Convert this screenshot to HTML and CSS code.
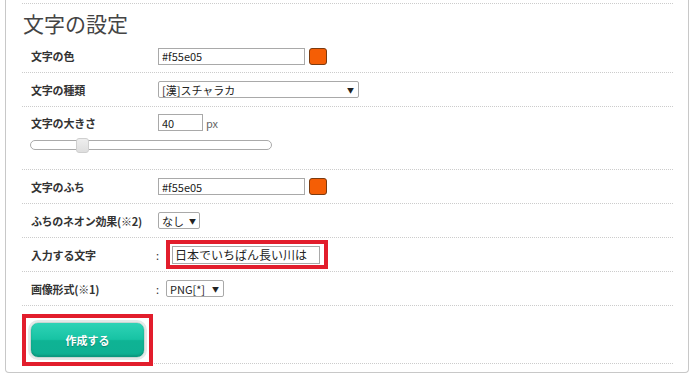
FILE: index.html
```html
<!DOCTYPE html>
<html lang="ja">
<head>
  <meta charset="UTF-8">
  <title>文字の設定</title>
  <link rel="stylesheet" href="styles.css">
</head>
<body>
  <div class="panel">
    <div class="top-rule"></div>
    <h2 class="title">文字の設定</h2>

    <div class="row first">
      <div class="label">文字の色</div>
      <input class="field color-field" type="text" value="#f55e05">
      <span class="swatch"></span>
    </div>

    <div class="row">
      <div class="label">文字の種類</div>
      <div class="select font-select"><span>[漢]スチャラカ</span><span class="arrow">▼</span></div>
    </div>

    <div class="row size-row">
      <div class="size-line">
        <div class="label">文字の大きさ</div>
        <input class="field size-field" type="text" value="40">
        <span class="unit">px</span>
      </div>
      <div class="slider"><span class="thumb"></span></div>
    </div>

    <div class="row">
      <div class="label">文字のふち</div>
      <input class="field color-field" type="text" value="#f55e05">
      <span class="swatch"></span>
    </div>

    <div class="row">
      <div class="label">ふちのネオン効果(※2)</div>
      <div class="select small-select"><span>なし</span><span class="arrow">▼</span></div>
    </div>

    <div class="row">
      <div class="label">入力する文字</div>
      <span class="colon">:</span>
      <div class="highlight text-box">
        <input class="field text-field" type="text" value="日本でいちばん長い川は">
      </div>
    </div>

    <div class="row">
      <div class="label">画像形式(※1)</div>
      <span class="colon">:</span>
      <div class="select format-select"><span>PNG[*]</span><span class="arrow">▼</span></div>
    </div>

    <div class="button-row">
      <div class="highlight btn-box">
        <button class="make-btn">作成する</button>
      </div>
    </div>
  </div>
</body>
</html>
```

FILE: styles.css
```css
body {
  margin: 0;
  background: #fff;
  font-family: "Noto Sans CJK JP", "DejaVu Sans", sans-serif;
  color: #333;
}

.panel {
  margin: 0 5px;
  height: 373px;
  box-sizing: border-box;
  border: 1px solid #c8c8c8;
  border-top: none;
  border-radius: 0 0 4px 4px;
  padding: 0 15px 0 16px;
}

.top-rule {
  height: 3px;
  border-bottom: 1px dotted #ccc;
}

.title {
  margin: 0;
  height: 36px;
  line-height: 34px;
  padding-top: 2px;
  font-size: 21px;
  font-weight: 400;
  color: #444;
  box-sizing: border-box;
  padding-left: 1px;
}

.row {
  display: flex;
  align-items: center;
  height: 33px;
  padding-left: 9px;
  border-bottom: 1px dotted #ccc;
  font-size: 11px;
  white-space: nowrap;
}

.row.first {
  height: 32px;
}

.label {
  width: 127px;
  flex-shrink: 0;
  font-weight: 700;
  color: #333;
  letter-spacing: -0.2px;
}

.field {
  box-sizing: border-box;
  height: 17px;
  border: 1px solid #a9a9a9;
  padding: 0 3px;
  font-family: inherit;
  font-size: 11px;
  color: #222;
  background: #fff;
  outline: none;
}

.color-field {
  width: 147px;
}

.swatch {
  width: 18px;
  height: 17px;
  margin-left: 4px;
  box-sizing: border-box;
  background: #f55e05;
  border: 1px solid #7a3a10;
  border-radius: 3px;
}

.select {
  display: flex;
  align-items: center;
  justify-content: space-between;
  box-sizing: border-box;
  height: 17px;
  border: 1px solid #a9a9a9;
  border-radius: 2px;
  padding: 0 4px 0 3px;
  font-size: 11px;
  color: #222;
  background: #fff;
  white-space: nowrap;
}

.arrow {
  font-size: 7px;
  margin-left: 5px;
}

.font-select {
  width: 201px;
}

.small-select {
  width: 42px;
}

.format-select {
  width: 58px;
  margin-left: 1px;
}

.size-row {
  flex-direction: column;
  align-items: stretch;
  height: 62px;
  padding-left: 0;
}

.size-line {
  display: flex;
  align-items: center;
  padding-left: 9px;
  margin-top: 7px;
}

.size-field {
  width: 45px;
}

.unit {
  margin-left: 3px;
  color: #666;
}

.slider {
  display: flex;
  align-items: center;
  width: 242px;
  height: 10px;
  margin: 9px 0 0 8px;
  box-sizing: border-box;
  border: 1px solid #aaa;
  border-radius: 5px;
  background: #fff;
}

.thumb {
  width: 13px;
  height: 15px;
  margin-left: 45px;
  box-sizing: border-box;
  border: 1px solid #cfcfcf;
  border-radius: 3px;
  background: linear-gradient(#eee, #dedede);
}

.colon {
  width: 9px;
  margin-left: -2px;
  color: #333;
}

.highlight {
  box-sizing: border-box;
  border: 4px solid #e21d2c;
}

.text-box {
  width: 162px;
  height: 29px;
  display: flex;
  align-items: center;
  padding-left: 2px;
  margin-left: 1px;
}

.text-field {
  width: 148px;
  height: 18px;
  font-size: 12px;
  padding: 0 2px;
}

.button-row {
  height: 57px;
  display: flex;
  align-items: flex-end;
  border-bottom: 1px dotted #ccc;
}

.btn-box {
  width: 131px;
  height: 52px;
  margin-bottom: -3px;
  display: flex;
  align-items: center;
  justify-content: center;
  background: #fff;
}

.make-btn {
  width: 115px;
  height: 36px;
  border: 1px solid #c9d6d3;
  border-radius: 8px;
  background: linear-gradient(#2fd3b6 0%, #17c3a4 48%, #0fb394 52%, #0fb093 100%);
  box-shadow: 0 0 0 2px #e4e9e8, inset 0 -2px 2px rgba(0, 80, 60, 0.25);
  color: #fff;
  font-family: inherit;
  font-size: 11px;
  font-weight: 700;
  text-shadow: 0 1px 1px rgba(0, 0, 0, 0.25);
  cursor: pointer;
}
```
